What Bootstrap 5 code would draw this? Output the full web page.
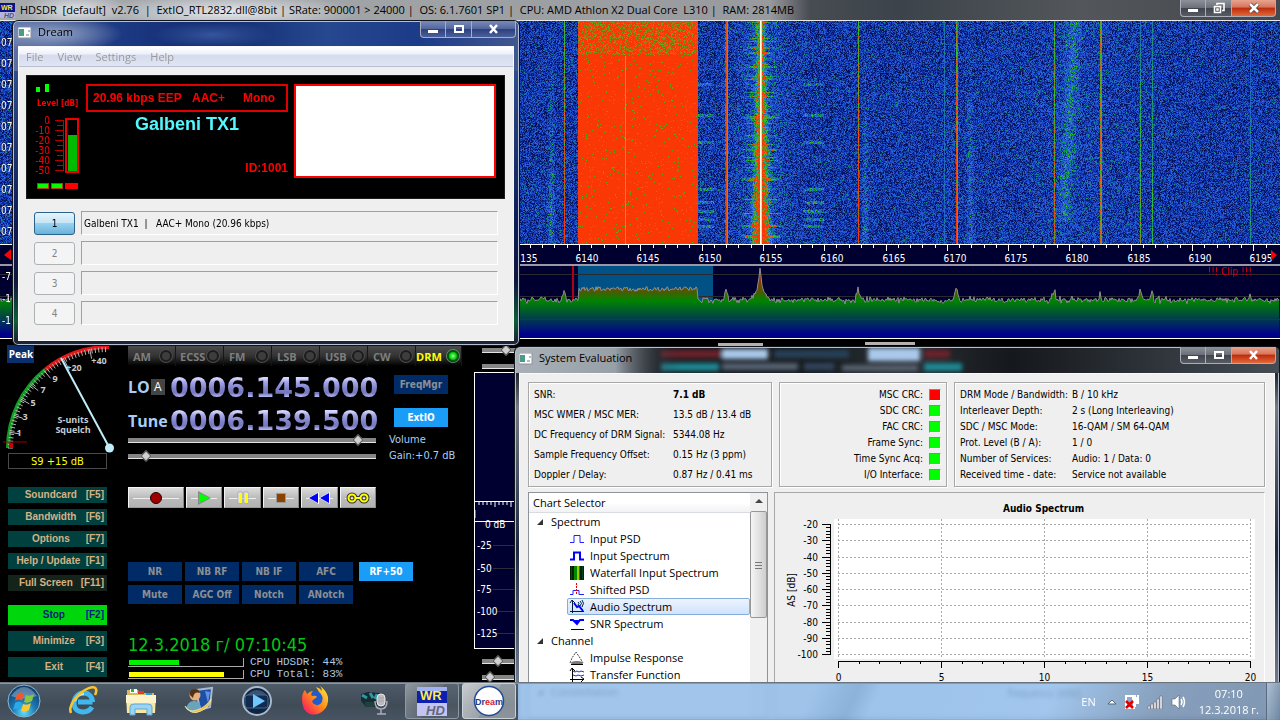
<!DOCTYPE html>
<html lang="en">
<head>
<meta charset="utf-8">
<meta name="viewport" content="width=device-width, initial-scale=1">
<title>HDSDR and Dream</title>
<link href="https://cdn.jsdelivr.net/npm/bootstrap@5.3.0/dist/css/bootstrap.min.css" rel="stylesheet">
<style>
:root { --seg: "Open Sans", "Noto Sans", sans-serif; --tah: "DejaVu Sans Condensed", "DejaVu Sans", sans-serif; --ari: "Liberation Sans", Arial, sans-serif; }
body { font: 11px/16px var(--seg); color: #000; background: #000; }
.tah { font-family: var(--tah); font-size: 10px; }
canvas, svg { display: block; }
.btn { --bs-btn-padding-x: 0; --bs-btn-padding-y: 0; --bs-btn-border-radius: 0; --bs-btn-font-size: 10px; --bs-btn-line-height: 14px; flex-shrink: 0; }

/* title bars */
.titlebar { height: 26px; }
.titlebar .caption { padding: 3px 0 0 6px; }
.titlebar .sysicon { margin-top: 6px; }
.appbar { height: 21px; border-bottom: 1px solid #e8e8e8;
  background: radial-gradient(ellipse 55px 16px at 75px 10px, #dfe4ea, transparent), radial-gradient(ellipse 130px 18px at 230px 12px, #e4e9ee, transparent), linear-gradient(90deg, #a6a9ac 0, #a0a3a6 400px, #989a9d 770px, #474c52 810px, #3c434a 900px, #53575b 1080px, #43484e 100%); }
.appbar .caption { white-space: pre; line-height: 20px; }
.winbtns .btn { height: 17px; width: 26px; border: 1px solid #a9aeb8; border-top: 0; border-left-width: 0; background: linear-gradient(#8d9199, #6b7078 48%, #3e434c 50%, #565b64); }
.winbtns .btn:first-child { border-left-width: 1px; border-bottom-left-radius: 4px; }
.winbtns .btn:last-child { width: 44px; border-bottom-right-radius: 4px; }
.winbtns .closer { background: linear-gradient(#e8a48f, #d9745a 45%, #bb2b0c 50%, #e2683a); }
.winbtns-blue .btn { background: linear-gradient(#7a8ab8, #53669e 48%, #2c3f7c 50%, #4a5f9c); }
.win .winbtns { margin-right: -2px; }

/* receiver display */
.app { min-height: 0; overflow: hidden; }
.waterfall { height: 223px; }
.scale { height: 20px; background: #000030; border-top: 1px solid #fff; font-size: 10px; }
.trace { height: 75px; border-top: 2px solid #9a98a4; border-bottom: 1px solid #fff; background: #000030; }
.scale, .trace, .times { color: #fff; font-family: var(--tah); }
.times { top: 11px; left: 1px; font-size: 10px; line-height: 21px; text-shadow: 0 0 1px #000; }
.levels { top: 0; left: 2px; font-size: 10px; line-height: 22px; }
.clip-note { right: 28px; top: -2px; color: #e00010; }
.panel { background: #000; min-height: 0; }

/* control panel */
.col-keys { width: 128px; padding-top: 6px; }
.keys { width: 99px; margin-left: 8px; }
.sbox { height: 16px; border: 1px solid #4a4a4a; color: #ff0; font: 11px/15px var(--tah); margin-bottom: 18px; }
.keylist { gap: 6px; }
.keybtn { display: flex; height: 16px; padding: 0 3px 0 8px; background: #00403f; color: #d6b184; border: 0; font: bold 10px/16px var(--ari); }
.keybtn:hover { background: #005a58; color: #d6b184; }
.keybtn.tall { height: 20px; line-height: 20px; padding-left: 14px; }
.keybtn.wide { padding-left: 3px; }
.keybtn.dim { background: #14241a; }
.keybtn.go { background: #00d60c; color: #001c80; }
.col-ctl { width: 346px; padding-top: 7px; }
.mode { width: 48px; height: 20px; padding: 0 3px 0 5px; border: 0; border-right: 1px solid #161616; background: linear-gradient(#4a4a4a, #333 50%, #000); color: #7e7e7e; font: bold 11px/19px var(--seg); }
.mode.on { color: #ff0; width: 46px; padding: 0 2px 0 0; }
.led { width: 12px; height: 12px; border: 2px solid #1c1c1c; border-radius: 50%; background: #3d3d3d; box-shadow: 0 0 0 1px #4b4b4b; }
.on .led { background: radial-gradient(#9f9, #0c0 60%); border-color: #051; box-shadow: 0 0 0 1px #686; }
.freqrow { height: 24px; margin-top: 9px; }
.name { width: 42px; font: bold 16px/26px var(--seg); color: #a9cdf7; }
.name button { width: 14px; height: 16px; margin-left: 1px; font: 12px/16px var(--seg); color: #fff; background: #444; border: 0; }
.freq { width: 224px; font: bold 27px/26px "DejaVu Sans", sans-serif; background: linear-gradient(#d4d6ff 14%, #a3a5e6 30%, #8183ca 55%, #7577bd 75%, #b9bcf8 92%); -webkit-background-clip: text; background-clip: text; color: transparent; }
.pad { width: 54px; height: 19px; background: #002b66; color: #8b8f94; border: 0; font: bold 10px/19px var(--tah); }
.pad:hover { background: #003c8c; color: #bbb; }
.pad.lit { background: #1a9df6; color: #fff; }
.lbl { color: #a9cdf7; font: 11px/16px var(--tah); margin-left: 13px; }
.sldbox { width: 248px; }
.sld { -webkit-appearance: none; appearance: none; display: block; height: 16px; width: 100%; margin: 0; background: linear-gradient(#858585, #858585) 0 6px / 100% 4px no-repeat, linear-gradient(#e4e4e4, #e4e4e4) 0 10px / 100% 1px no-repeat; }
.sld::-webkit-slider-thumb { -webkit-appearance: none; width: 8px; height: 8px; background: #d0d0d0; border: 1px solid #555; transform: rotate(45deg); }
.deck { width: 248px; margin-top: 23px; gap: 2px; }
.deck .btn { flex: 1 1 0; height: 21px; border: 1px solid #f4f4f4; border-right-color: #888; border-bottom-color: #999; background: linear-gradient(90deg, #eee, #eee) 4px 10px / calc(100% - 8px) 1px no-repeat, linear-gradient(#dcdcdc, #bcbcbc 50%, #b2b2b2); }
.deck .btn:first-child { flex: 0 0 56px; }
.fx { margin-top: 54px; display: grid; grid-template-columns: repeat(4, 54px) 54px; gap: 4px 3px; }
.fx .lit { margin-left: 3px; }
.today { margin-top: 30px; color: #00c814; font: 18px/22px var(--tah); }
.cpu { height: 12px; font: 11px/12px "Liberation Mono", monospace; color: #a9c8e8; gap: 6px; }
.gauge { width: 116px; height: 9px; border: 1px solid #aaa; border-width: 0 1px 1px 0; --bs-progress-bg: #000; --bs-progress-border-radius: 0; padding: 2px 0 1px 1px; }
.audio { width: 60px; padding-top: 3px; }
.af { height: 277px; margin-top: -2px; background: #000030; border: 1px solid #fff; }

/* framed windows */
.win { border: 1px solid #10141c; border-radius: 6px; box-shadow: inset 0 0 0 1px #b7c0d0; padding: 0 5px 5px; }
.dream { left: 12px; top: 20px; width: 508px; height: 326px; background: radial-gradient(ellipse 70px 18px at 40px 13px, #93a3c4, transparent), radial-gradient(ellipse 60px 14px at 200px 14px, #35559c, transparent), linear-gradient(90deg, #5b70a4, #1d3a84 20%, #122a70 40%, #26488f 62%, #1c3b88 80%, #40588f) 0 0 / 100% 50px no-repeat, linear-gradient(#31508f 40px, #0d1d55 200px, #10163c 260px, #0e5f36 300px, #1d2433 320px); }
.dream .titlebar { height: 25px; }
.body-face { background: #efefef; border: 1px solid #fafafa; }
.dream .body-face { height: 295px; }
.menus { height: 20px; background: linear-gradient(#fff, #eef1f9 35%, #d6dcee 45%, #dfe5f3); border-bottom: 1px solid #b9bfd0; }
.menus .nav-link { padding: 0 7px; color: #9a9a9a; font-size: 11px; line-height: 19px; }
.screen { margin: 8px 8px 0 7px; height: 124px; background: #000; color: #f00; border: 1px solid #1c1c1c; font: bold 12px/16px var(--ari); padding: 8px; gap: 6px; }
.info { margin-left: -1px; }
.stat { border: 2px solid #e00000; height: 28px; }
.rate { width: 104px; padding-left: 5px; }
.codec { width: 51px; }
.logo-area { width: 202px; height: 94px; border: 2px solid #f00; background: #fff; }
.station { font-size: 18px; line-height: 24px; color: #54f7ff; margin-bottom: 24px; }
.svc { gap: 6px; padding: 12px 15px 0; }
.svc > div { gap: 6px; }
.svc .btn { width: 41px; height: 23px; border: 1px solid #adb2b5; border-radius: 3px; background: #f4f4f4; color: #838383; font: 10px/21px var(--tah); opacity: 1; }
.svc .btn.cur { border-color: #2c628b; background: linear-gradient(#e5f4fc, #c4e5f6 48%, #98d1ef 50%, #68b3db); color: #000; }
.svc .form-control { height: 24px; padding: 0 2px; font: 10px/22px var(--tah); border: 1px solid #fff; border-top-color: #a0a0a0; border-left-color: #a0a0a0; border-radius: 0; background: #efefef; color: #000; }
.evalwin { left: 514px; right: 0; top: 346px; bottom: 0; border-radius: 6px 6px 0 0; padding: 0 4px; background: linear-gradient(#4d5660 0, #232a33 28px, #737a84 60px, #1d2740 200px, #8790a0 100%); overflow: hidden; }
.evalwin .winbtns { margin-right: -1px; }
.evalwin .body-face { padding: 8px 9px 0 8px; }
.glass { left: 1px; top: 1px; width: 100%; height: 25px; }
.readouts { gap: 7px; }
.cell3 { border: 1px solid #a8a8a8; box-shadow: inset 1px 1px #fff, 1px 1px #fff; padding: 4px 5px; height: 105px; }
.cell3.quality { width: 244px; padding-top: 2px; flex-shrink: 0; }
.cell3.checks { width: 168px; flex-shrink: 0; }
.cell3 table { font: 10px/16px var(--tah); }
.cell3 td, .cell3 th { padding: 0; font-weight: normal; white-space: nowrap; }
.quality td, .quality th { line-height: 20px; }
.quality th { width: 139px; }
.service { padding-right: 0; }
.service th { width: 112px; }
.checks td { width: 18px; }
.lamp { width: 12px; height: 12px; border: 1px solid #888; border-right-color: #fff; border-bottom-color: #fff; background: #0f0; }
.lamp.bad { background: #f00; }
.lower { gap: 6px; margin-top: 5px; }
.tree { width: 240px; border: 1px solid #8d929b; background: #fff; font-size: 11px; }
.tree header { height: 20px; line-height: 20px; padding-left: 4px; background: linear-gradient(#fff 50%, #f1f2f4); border-bottom: 1px solid #d8dbe0; }
.tree li { height: 17px; line-height: 17px; display: flex; align-items: center; }
.tree .group { padding-left: 6px; gap: 6px; }
.tree .leaf { margin-left: 38px; padding-left: 2px; gap: 5px; }
.tree .picked { border: 1px solid #84acdd; border-radius: 2px; background: linear-gradient(#ecf4fe, #cfe3fc); padding-left: 1px; }
.bar-v { width: 17px; background: #f0f0f0; }
.grip { height: 107px; border: 1px solid #979797; border-radius: 2px; background: linear-gradient(90deg, #f5f5f5, #e2e2e2 50%, #cdcdcd); }
.chartbox { border: 1px solid #a8a8a8; border-right-color: #fff; }
.chartbox h2 { font: bold 10px/16px var(--tah); margin: 8px 0 0 48px; }

/* taskbar */
.taskbar { height: 38px; padding-left: 3px; border-top: 1px solid #6c757e; box-shadow: inset 0 1px #8b98a5; background: linear-gradient(#4e5b68, #3f4b57 60%, #485461) 0 0 / 518px 100% no-repeat, linear-gradient(115deg, #90bbe8d8 0, #90bbe8d8 740px, #7aa6d6d8 780px, #8fbbead8 800px, #93beecd8 960px, #7390b2d8 1060px, #7089a8e0 1200px); backdrop-filter: blur(2px); }
.task { width: 58px; height: 36px; border: 0; }
.task.start { width: 51px; }
.task.open { width: 54px; margin-left: 3px; border: 1px solid #8d99a5; border-radius: 3px; background: linear-gradient(125deg, #ffffff60, #ffffff20 50%, #ffffff10 52%); }
.task.front { background: linear-gradient(125deg, #ffffffb0, #ffffff78 50%, #ffffff60 52%); border-color: #c8d0d8; }
.tray { color: #fff; gap: 7px; }
.tray .lang { margin-right: 4px; }
.peek { width: 14px; border-left: 1px solid #5a6c80; background: linear-gradient(110deg, #c4d2e0a0, #6d86a0a0); }
</style>
</head>
<body>
<div class="position-relative vh-100 overflow-hidden d-flex flex-column">

<main class="app flex-grow-1 d-flex flex-column">
  <div class="appbar d-flex align-items-start flex-shrink-0">
    <svg class="flex-shrink-0" width="16" height="19" viewBox="0 0 16 19"><rect y="3" width="15" height="9" fill="#0a1487"/><text x="1" y="10" font-family="Liberation Sans" font-weight="bold" font-size="7" fill="#ffe430">WR</text><rect y="12" width="15" height="6" fill="#b4b4e4"/><text x="4" y="18" font-family="Liberation Sans" font-style="italic" font-weight="bold" font-size="7" fill="#556">HD</text></svg>
    <span class="caption flex-grow-1 ms-1 text-truncate">HDSDR  [default]  v2.76  |  ExtIO_RTL2832.dll@8bit | SRate: 900001 &gt; 24000 |  OS: 6.1.7601 SP1 |  CPU: AMD Athlon X2 Dual Core  L310 |  RAM: 2814MB</span>
    <div class="winbtns d-flex me-1">
      <button class="btn" aria-label="Minimize"><svg class="mx-auto" width="12" height="12" viewBox="0 0 12 12"><rect x="1" y="7" width="10" height="3" fill="#fff"/></svg></button>
      <button class="btn" aria-label="Restore"><svg class="mx-auto" width="12" height="12" viewBox="0 0 12 12"><path d="M4 3V1.500h7v7H9M1.500 4.500h6v6h-6zM4 7h1v1H4z" fill="none" stroke="#fff" stroke-width="1.600"/></svg></button>
      <button class="btn closer" aria-label="Close"><svg class="mx-auto" width="12" height="12" viewBox="0 0 12 12"><path d="M2 2l8 8M10 2l-8 8" stroke="#444" stroke-width="4"/><path d="M2 2l8 8M10 2l-8 8" stroke="#fff" stroke-width="2.500"/></svg></button>
    </div>
  </div>
  <div class="waterfall position-relative flex-shrink-0">
    <canvas id="fall" class="w-100 h-100"></canvas>
    <div class="times position-absolute">07<br>07<br>07<br>07<br>07<br>07<br>07<br>07<br>07<br>07</div>
  </div>
  <div class="scale flex-shrink-0"><svg id="ruler" width="100%" height="19"></svg></div>
  <div class="trace position-relative flex-shrink-0">
    <canvas id="spec" class="w-100 h-100"></canvas>
    <div class="levels position-absolute">-7<br>-1<br>-1</div>
    <div class="clip-note position-absolute tah">!!! Clip !!!</div>
  </div>

  <section class="panel flex-grow-1 d-flex" aria-label="Receiver controls">
    <div class="col-keys flex-shrink-0">
      <svg id="meter" width="118" height="108" viewBox="0 345 118 108" role="img" aria-label="S-meter"></svg>
      <div class="keys">
        <div class="sbox text-center">S9 +15 dB</div>
        <div class="keylist d-flex flex-column">
          <button class="btn keybtn"><span class="flex-grow-1">Soundcard</span><span>[F5]</span></button>
          <button class="btn keybtn"><span class="flex-grow-1">Bandwidth</span><span>[F6]</span></button>
          <button class="btn keybtn"><span class="flex-grow-1">Options</span><span>[F7]</span></button>
          <button class="btn keybtn wide"><span class="flex-grow-1">Help / Update</span><span>[F1]</span></button>
          <button class="btn keybtn wide dim mb-2"><span class="flex-grow-1">Full Screen</span><span>[F11]</span></button>
          <button class="btn keybtn tall go"><span class="flex-grow-1">Stop</span><span>[F2]</span></button>
          <button class="btn keybtn tall"><span class="flex-grow-1">Minimize</span><span>[F3]</span></button>
          <button class="btn keybtn tall"><span class="flex-grow-1">Exit</span><span>[F4]</span></button>
        </div>
      </div>
    </div>
    <div class="col-ctl flex-shrink-0">
      <div class="d-flex">
        <button class="btn mode d-flex justify-content-between align-items-center">AM<span class="led"></span></button>
        <button class="btn mode d-flex justify-content-between align-items-center px-1">ECSS<span class="led"></span></button>
        <button class="btn mode d-flex justify-content-between align-items-center">FM<span class="led"></span></button>
        <button class="btn mode d-flex justify-content-between align-items-center">LSB<span class="led"></span></button>
        <button class="btn mode d-flex justify-content-between align-items-center">USB<span class="led"></span></button>
        <button class="btn mode d-flex justify-content-between align-items-center">CW<span class="led"></span></button>
        <button class="btn mode on d-flex justify-content-between align-items-center">DRM<span class="led"></span></button>
      </div>
      <div class="d-flex freqrow"><div class="name d-flex align-items-center">LO<button class="p-0">A</button></div><div class="freq">0006.145.000</div><button class="btn pad">FreqMgr</button></div>
      <div class="d-flex freqrow"><div class="name">Tune</div><div class="freq">0006.139.500</div><button class="btn pad lit">ExtIO</button></div>
      <div class="d-flex"><div class="sldbox"><input id="vol" class="sld" type="range" value="94"></div><label class="lbl" for="vol">Volume</label></div>
      <div class="d-flex"><div class="sldbox"><input id="gain" class="sld" type="range" value="6"></div><label class="lbl" for="gain">Gain:+0.7 dB</label></div>
      <div class="deck d-flex">
        <button class="btn" aria-label="Record"><svg class="mx-auto" width="14" height="14"><circle cx="7" cy="7" r="5.500" fill="#a00000" stroke="#200"/></svg></button>
        <button class="btn" aria-label="Play"><svg class="mx-auto" width="14" height="14"><path d="M1 0l13 7-13 7z" fill="#888"/><path d="M2 2l11 5-11 5z" fill="#0f0"/></svg></button>
        <button class="btn" aria-label="Pause"><svg class="mx-auto" width="14" height="14"><path d="M2 1h4v11H2zM8 1h4v11H8z" fill="#fff" stroke="#aaa"/><path d="M3 2h3v10H3zM9 2h3v10H9z" fill="#ff0"/></svg></button>
        <button class="btn" aria-label="Stop playback"><svg class="mx-auto" width="14" height="14"><rect x="2.500" y="2.500" width="9" height="9" fill="#8a4300" stroke="#9a9a9a"/></svg></button>
        <button class="btn" aria-label="Rewind"><svg class="mx-auto" width="22" height="14"><path d="M11 1v12L0 7zM22 1v12L11 7z" fill="#fff"/><path d="M10 2v10L1 7zM21 2v10l-9-5z" fill="#00f"/></svg></button>
        <button class="btn" aria-label="Loop"><svg class="mx-auto" width="24" height="14"><g fill="none"><circle cx="6" cy="7" r="3.500" stroke="#333" stroke-width="4"/><circle cx="18" cy="7" r="3.500" stroke="#333" stroke-width="4"/><path d="M9 7h6" stroke="#333" stroke-width="4"/><circle cx="6" cy="7" r="3.500" stroke="#ff0" stroke-width="2"/><circle cx="18" cy="7" r="3.500" stroke="#ff0" stroke-width="2"/><path d="M9 7h6" stroke="#ff0" stroke-width="2"/></g></svg></button>
      </div>
      <div class="fx">
        <button class="btn pad">NR</button><button class="btn pad">NB RF</button><button class="btn pad">NB IF</button><button class="btn pad">AFC</button><button class="btn pad lit">RF+50</button>
        <button class="btn pad">Mute</button><button class="btn pad">AGC Off</button><button class="btn pad">Notch</button><button class="btn pad">ANotch</button>
      </div>
      <div class="today">12.3.2018 г/ 07:10:45</div>
      <div class="cpu d-flex align-items-center"><div class="progress gauge"><div class="progress-bar" style="width:44%;background:#00f000"></div></div>CPU HDSDR: 44%</div>
      <div class="cpu d-flex align-items-center"><div class="progress gauge"><div class="progress-bar" style="width:83%;background:#ffff00"></div></div>CPU Total: 83%</div>
    </div>
    <div class="audio flex-shrink-0">
      <div class="ps-2"><input class="sld" type="range" value="45" aria-label="Audio zoom"><input class="sld" type="range" value="95" aria-label="Audio speed"></div>
      <div class="af"><svg width="58" height="274" class="tah">
        <path d="M0 128.500h58M0 148.500h58" stroke="#fff"/><path d="M4 129v3M8 129v3M12 129v3M16 129v3M20 129v5M24 129v3M28 129v3M32 129v3M36 129v5M40 129v3" stroke="#fff"/>
        <path d="M0 137v8" stroke="#ffe080"/><path d="M18 172.500h40M18 195.500h40M18 216.500h40M22 238.500h40M22 260.500h40" stroke="#2c2c3c"/>
        <g fill="#fff"><text x="10" y="155">0 dB</text><text x="2" y="176">-25</text><text x="2" y="199">-50</text><text x="2" y="220">-75</text><text x="2" y="242">-100</text><text x="2" y="264">-125</text></g></svg></div>
      <div class="ps-2 pt-1"><input class="sld" type="range" value="28" aria-label="Audio contrast"><input class="sld" type="range" value="8" aria-label="Audio brightness"></div>
    </div>
    <div class="flex-grow-1"><svg width="100%" height="8"><path d="M184 5.500h45M331 4.500h50" stroke="#b4b0b0" stroke-width="3"/></svg></div>
  </section>
</main>

<section class="win dream position-absolute" aria-label="Dream">
  <div class="titlebar d-flex">
    <svg class="sysicon" width="14" height="12" viewBox="0 0 14 12"><rect width="13" height="11" fill="#fff" stroke="#8a94a0"/><rect x="1" y="2" width="5" height="7" fill="#4a9a88"/><path d="M8 8h3M11 3v2" stroke="#678"/></svg>
    <span class="caption flex-grow-1">Dream</span>
    <div class="winbtns winbtns-blue d-flex">
      <button class="btn" aria-label="Minimize"><svg class="mx-auto" width="12" height="12"><rect x="1" y="7" width="10" height="3" fill="#fff"/></svg></button>
      <button class="btn" aria-label="Maximize"><svg class="mx-auto" width="12" height="12"><rect x="2" y="3" width="8" height="6" fill="none" stroke="#fff" stroke-width="2"/></svg></button>
      <button class="btn" aria-label="Close"><svg class="mx-auto" width="12" height="12"><path d="M2 2l7 8M9 2l-7 8" stroke="#fff" stroke-width="2.500"/></svg></button>
    </div>
  </div>
  <div class="body-face">
    <nav class="menus nav flex-nowrap"><a class="nav-link" href="#">File</a><a class="nav-link" href="#">View</a><a class="nav-link" href="#">Settings</a><a class="nav-link" href="#">Help</a></nav>
    <div class="screen d-flex">
      <svg width="46" height="108" viewBox="35 84 46 108" class="flex-shrink-0">
        <path d="M36 87h4v5h-4zM45 84h4v8h-4z" fill="#0f0"/>
        <text x="37" y="106" font-family="DejaVu Sans Condensed" font-weight="bold" font-size="8" fill="#f00">Level [dB]</text>
        <g font-family="DejaVu Sans Condensed" font-weight="normal" font-size="10" fill="#f00" text-anchor="end"><text x="50" y="124">0</text><text x="50" y="134">-10</text><text x="50" y="144">-20</text><text x="50" y="154">-30</text><text x="50" y="164">-40</text><text x="50" y="174">-50</text></g>
        <path d="M55 120.500h8M57 125.500h6M55 130.500h8M57 135.500h6M55 140.500h8M57 145.500h6M55 150.500h8M57 155.500h6M55 160.500h8M57 165.500h6M55 170.500h8M63.500 120v51" stroke="#b00"/>
        <rect x="66" y="119" width="12" height="53" fill="none" stroke="#e00" stroke-width="2"/><rect x="68" y="135" width="9" height="36" fill="#0b0"/>
        <g stroke="#a40"><rect x="37.500" y="183.500" width="11" height="5" fill="#0f0"/><rect x="51.500" y="183.500" width="11" height="5" fill="#0f0"/><rect x="65.500" y="183.500" width="12" height="5" fill="#f00" stroke="#f00"/></g>
      </svg>
      <div class="info flex-grow-1 d-flex flex-column">
        <div class="stat d-flex align-items-center"><span class="rate">20.96 kbps EEP</span><span class="codec">AAC+</span><span>Mono</span></div>
        <div class="station text-center">Galbeni TX1</div>
        <div class="text-end">ID:1001</div>
      </div>
      <div class="logo-area flex-shrink-0"></div>
    </div>
    <div class="svc d-flex flex-column">
      <div class="d-flex align-items-center"><button class="btn cur">1</button><input class="form-control" readonly aria-label="Service 1" value="Galbeni TX1  |   AAC+ Mono (20.96 kbps)"></div>
      <div class="d-flex align-items-center"><button class="btn" disabled>2</button><input class="form-control" readonly aria-label="Service 2"></div>
      <div class="d-flex align-items-center"><button class="btn" disabled>3</button><input class="form-control" readonly aria-label="Service 3"></div>
      <div class="d-flex align-items-center"><button class="btn" disabled>4</button><input class="form-control" readonly aria-label="Service 4"></div>
    </div>
  </div>
</section>

<section class="win evalwin position-absolute d-flex flex-column" aria-label="System Evaluation">
  <svg class="glass position-absolute"><defs><filter id="soft" x="-10%" y="-50%" width="120%" height="200%"><feGaussianBlur stdDeviation="2"/></filter>
    <linearGradient id="haze"><stop offset="0" stop-color="#a9b0b7"/><stop offset=".6" stop-color="#98a0a7"/><stop offset="1" stop-color="#20272f" stop-opacity="0"/></linearGradient>
    <linearGradient id="dusk"><stop offset="0" stop-color="#14181d"/><stop offset=".4" stop-color="#181c21"/><stop offset=".5" stop-color="#2a3036"/><stop offset=".65" stop-color="#15181c"/><stop offset="1" stop-color="#454d55"/></linearGradient></defs>
    <rect width="100%" height="25" fill="url(#dusk)"/>
    <g filter="url(#soft)"><rect x="145" y="2" width="60" height="8" fill="#6b232c"/><rect x="145" y="15" width="58" height="8" fill="#1f8792"/><rect x="206" y="1" width="46" height="10" fill="#a9c8ea"/><rect x="206" y="15" width="76" height="7" fill="#55626f"/><rect x="258" y="2" width="75" height="8" fill="#274157"/><rect x="288" y="15" width="30" height="7" fill="#32455c"/><rect x="352" y="0" width="52" height="13" fill="#a9c8ea"/><rect x="326" y="17" width="76" height="6" fill="#56626e"/><rect x="408" y="2" width="26" height="8" fill="#6b232c"/><rect x="408" y="15" width="38" height="8" fill="#1f8792"/></g>
    <rect width="165" height="25" fill="url(#haze)"/></svg>
  <div class="titlebar d-flex position-relative flex-shrink-0">
    <svg class="sysicon" width="14" height="12" viewBox="0 0 14 12"><rect width="13" height="11" fill="#fff" stroke="#8a94a0"/><rect x="1" y="2" width="5" height="7" fill="#4a9a88"/><path d="M8 8h3M11 3v2" stroke="#678"/></svg>
    <span class="caption flex-grow-1">System Evaluation</span>
    <div class="winbtns d-flex">
      <button class="btn" aria-label="Minimize"><svg class="mx-auto" width="12" height="12"><rect x="1" y="7" width="10" height="3" fill="#fff"/></svg></button>
      <button class="btn" aria-label="Maximize"><svg class="mx-auto" width="12" height="12"><rect x="2" y="3" width="8" height="6" fill="none" stroke="#fff" stroke-width="2"/></svg></button>
      <button class="btn closer" aria-label="Close"><svg class="mx-auto" width="12" height="12"><path d="M2 2l7 8M9 2l-7 8" stroke="#fff" stroke-width="2.500"/></svg></button>
    </div>
  </div>
  <div class="body-face position-relative flex-grow-1 d-flex flex-column">
    <div class="readouts d-flex">
      <div class="cell3 quality"><table class="w-100"><tbody>
        <tr><th>SNR:</th><td class="fw-bold">7.1 dB</td></tr>
        <tr><th>MSC WMER / MSC MER:</th><td>13.5 dB / 13.4 dB</td></tr>
        <tr><th>DC Frequency of DRM Signal:</th><td>5344.08 Hz</td></tr>
        <tr><th>Sample Frequency Offset:</th><td>0.15 Hz (3 ppm)</td></tr>
        <tr><th>Doppler / Delay:</th><td>0.87 Hz / 0.41 ms</td></tr></tbody></table></div>
      <div class="cell3 checks"><table class="w-100 text-end"><tbody>
        <tr><th>MSC CRC:</th><td><div class="lamp bad ms-auto"></div></td></tr>
        <tr><th>SDC CRC:</th><td><div class="lamp ms-auto"></div></td></tr>
        <tr><th>FAC CRC:</th><td><div class="lamp ms-auto"></div></td></tr>
        <tr><th>Frame Sync:</th><td><div class="lamp ms-auto"></div></td></tr>
        <tr><th>Time Sync Acq:</th><td><div class="lamp ms-auto"></div></td></tr>
        <tr><th>I/O Interface:</th><td><div class="lamp ms-auto"></div></td></tr></tbody></table></div>
      <div class="cell3 service flex-grow-1"><table class="w-100"><tbody>
        <tr><th>DRM Mode / Bandwidth:</th><td>B / 10 kHz</td></tr>
        <tr><th>Interleaver Depth:</th><td>2 s (Long Interleaving)</td></tr>
        <tr><th>SDC / MSC Mode:</th><td>16-QAM / SM 64-QAM</td></tr>
        <tr><th>Prot. Level (B / A):</th><td>1 / 0</td></tr>
        <tr><th>Number of Services:</th><td>Audio: 1 / Data: 0</td></tr>
        <tr><th>Received time - date:</th><td>Service not available</td></tr></tbody></table></div>
    </div>
    <div class="lower d-flex flex-grow-1">
      <div class="tree d-flex flex-shrink-0">
        <div class="flex-grow-1">
          <header>Chart Selector</header>
          <ul class="list-unstyled m-0">
            <li class="group"><svg width="10" height="10"><path d="M8 2v6H2z" fill="#333"/></svg>Spectrum</li>
            <li class="leaf"><svg width="16" height="16"><path d="M1 11.500h4v-7h6v7h4" fill="none" stroke="#22f"/></svg>Input PSD</li>
            <li class="leaf"><svg width="16" height="16"><path d="M1 11.500h4v-7h6v7h4" fill="none" stroke="#00f" stroke-width="2"/></svg>Input Spectrum</li>
            <li class="leaf"><svg width="16" height="16"><path d="M1 1h14v14H1z" fill="#020"/><path d="M2 1h1v14H2zM13 1h1v14h-1z" fill="#042"/><path d="M5 1h6v14H5z" fill="#080"/><path d="M8 1h2v14H8z" fill="#9c0"/></svg>Waterfall Input Spectrum</li>
            <li class="leaf"><svg width="16" height="16"><path d="M1 12.500h3v-4h6v4h5" fill="none" stroke="#22f"/><path d="M7.500 1v12" stroke="#e00" stroke-dasharray="2 1"/></svg>Shifted PSD</li>
            <li class="leaf picked"><svg width="16" height="16"><path d="M3.500 14V2M1 4l2-3 3 3M1 12.500h14" fill="none" stroke="#001a40"/><path d="M5 4l3 4 2-1 4 5" fill="none" stroke="#00f" stroke-width="2"/><path d="M9 3q2 1 0 3M11 2q3 2 0 5M13 1q3 3 0 7" fill="none" stroke="#024"/></svg>Audio Spectrum</li>
            <li class="leaf"><svg width="16" height="16"><path d="M1 4h3l4 4 3-4h4" fill="none" stroke="#00f" stroke-width="2"/><path d="M5 4h5l-2 4z" fill="#00f"/><path d="M2 13.500h13" stroke="#000"/></svg>SNR Spectrum</li>
            <li class="group"><svg width="10" height="10"><path d="M8 2v6H2z" fill="#333"/></svg>Channel</li>
            <li class="leaf"><svg width="16" height="16"><path d="M1 13l2-5 4-6 4 6 3 5" fill="none" stroke="#444" stroke-dasharray="2 1"/><ellipse cx="8" cy="13" rx="6" ry="2" fill="#777"/><path d="M2 14.500h12" stroke="#000"/></svg>Impulse Response</li>
            <li class="leaf"><svg width="16" height="16"><path d="M3.500 15V2M1 4l2-3 3 3M1 12.500h14M12 10l3 2-3 3" fill="none" stroke="#000"/><path d="M4 4l2 1 2-1 2 1 2-1 3 1M4 8l3 1 2-1 3 1 3-1" fill="none" stroke="#22f"/></svg>Transfer Function</li>
            <li class="group" aria-hidden="true"><svg width="10" height="10"><path d="M8 2v6H2z" fill="#333"/></svg>Constellation</li>
          </ul>
        </div>
        <div class="bar-v"><svg width="17" height="18"><path d="M5 10l4-4 4 4z" fill="#444"/></svg><div class="grip d-flex align-items-center justify-content-center"><svg width="8" height="8"><path d="M0 1.500h7M0 4.500h7M0 7.500h7" stroke="#777"/></svg></div></div>
      </div>
      <div class="chartbox flex-grow-1">
        <h2 class="text-center">Audio Spectrum</h2>
        <svg id="chart" class="tah" width="100%" height="185"></svg>
      </div>
    </div>
  </div>
</section>

<footer class="taskbar position-relative flex-shrink-0 d-flex align-items-stretch">
  <button class="btn task start" aria-label="Start"><svg width="38" height="36" viewBox="0 0 38 36"><defs><radialGradient id="orb" cx=".5" cy=".85" r=".9"><stop offset="0" stop-color="#5fe0ff"/><stop offset=".4" stop-color="#1d76b0"/><stop offset="1" stop-color="#0b2f5c"/></radialGradient></defs><circle cx="21" cy="18" r="16" fill="url(#orb)" stroke="#8fb7cc"/><path d="M8 13q13-18 26 0-13 5-26 0z" fill="#fff" opacity=".3"/><path d="M14 11q4-3 7 0l-2 7q-3-3-7 0z" fill="#f1592a"/><path d="M23 12q4 2 8-1l-2 7q-4 3-8 1z" fill="#8cc63f"/><path d="M12 20q4-3 7 0l-2 7q-4-3-7 0z" fill="#29a9e8"/><path d="M20 21q4 2 8-1l-2 7q-4 3-8 1z" fill="#fdc82f"/></svg></button>
  <button class="btn task" aria-label="Internet Explorer"><svg class="mx-auto" width="32" height="32" viewBox="0 0 32 32"><path d="M25.500 17H11M25 22q-3 5-9 5c-6 0-9-4-9-9s4-10 9.500-10 9 4 9 9" fill="none" stroke="#3fb8f0" stroke-width="5"/><path d="M8 16q2-7 9-7" fill="none" stroke="#b8ecff" stroke-width="2"/><path d="M4 28c-3-6 4-17 14-23 5-3 10-4 11-1 1 2 0 4-1 6" fill="none" stroke="#f7c52e" stroke-width="2.500"/></svg></button>
  <button class="btn task" aria-label="Explorer"><svg class="mx-auto" width="34" height="32" viewBox="0 0 34 32"><path d="M3 5h11l2 3h14v20H3z" fill="#d8ba5c"/><path d="M6 4h7v4H6z" fill="#fff"/><path d="M7 4h3v3H7z" fill="#2b2"/><path d="M14 6h6v3h-6z" fill="#e33"/><path d="M22 8h6v3h-6z" fill="#39d"/><path d="M2 10h30l-1 18H3z" fill="#f8e6a2"/><path d="M2 10h30v8H2z" fill="#fdf3c8"/><path d="M6 30V22q0-3 4-3h14q4 0 4 3v8h-5v-6H11v6z" fill="#9bd4f2" stroke="#5ba9d4"/></svg></button>
  <button class="btn task" aria-label="User account"><svg class="mx-auto" width="32" height="32" viewBox="0 0 32 32"><path d="M13 5l16-2-2 19-10 3z" fill="#1d4fa5" stroke="#a9b8cc" stroke-width="2"/><path d="M22 6l5 1-2 11z" fill="#5e94dd"/><circle cx="12" cy="10" r="5.500" fill="#e3b07e"/><path d="M7 10q-1-6 5-6 4 0 5 4-6-2-7 5z" fill="#513216"/><path d="M3 24q2-9 9-8 6 1 6 8l-5 4z" fill="#69a4ba"/><path d="M2 21q3 7 12 4T28 14q0 7-10 12T2 21z" fill="#f3be3b" stroke="#fff0b0" stroke-width=".7"/></svg></button>
  <button class="btn task" aria-label="Media player"><svg class="mx-auto" width="32" height="32" viewBox="0 0 32 32"><circle cx="16" cy="16" r="14" fill="#0d2443" stroke="#aab8c8" stroke-width="2"/><path d="M5 11q11-12 22 0v5H5z" fill="#3c5370"/><rect x="4" y="10" width="23" height="13" rx="3" fill="#112b4f" stroke="#456991"/><path d="M12 9l12 7-12 7z" fill="#6ec8ff"/></svg></button>
  <button class="btn task" aria-label="Firefox"><svg class="mx-auto" width="32" height="32" viewBox="0 0 32 32"><defs><linearGradient id="fox" x1="1" y1="0" x2="0" y2="1"><stop offset="0" stop-color="#fff04a"/><stop offset=".45" stop-color="#ff9215"/><stop offset=".8" stop-color="#ff344f"/><stop offset="1" stop-color="#f018a0"/></linearGradient></defs><circle cx="17" cy="15" r="9" fill="#205bcf"/><path d="M3 14q0-6 3-9l2 4q3-3 6-3-3 3-1 5 4-1 5 1l-4 3q-2 2 1 4 5 3 8-2 2-6-3-10l-3-5q4 1 6 4 0-3-2-5 6 4 8 11 1 9-5 14t-13 3Q3 26 3 14z" fill="url(#fox)"/></svg></button>
  <button class="btn task" aria-label="Voice recorder"><svg class="mx-auto" width="32" height="32" viewBox="0 0 32 32"><path d="M4 9l7-2 11 1 3 5-5 9H9l-5-6z" fill="#152c32"/><path d="M5 10l5 3M13 8l3 5M20 9l-2 5" stroke="#2e98a2" stroke-width="3"/><path d="M8 17h9v5H8z" fill="#203f3d"/><rect x="20" y="9" width="8" height="12" rx="4" fill="#bbb" stroke="#e8e8e8"/><path d="M18 16q0 8 6 8t6-8M24 24v5M20 29h9M21 13h6M21 16h6" fill="none" stroke="#aab" stroke-width="1.500"/></svg></button>
  <button class="btn task open" aria-label="HDSDR"><svg class="mx-auto" width="32" height="32" viewBox="0 0 32 32"><rect x="1" y="2" width="30" height="16" fill="#0c1fae"/><rect x="1" y="2" width="30" height="4" fill="#a2b2f0"/><text x="4" y="15" font-family="Liberation Sans" font-weight="bold" font-size="13" fill="#ffe94a">WR</text><rect x="1" y="18" width="30" height="13" fill="#c2c5f4"/><text x="10" y="30" font-family="Liberation Sans" font-style="italic" font-weight="bold" font-size="13" fill="#667">HD</text></svg></button>
  <button class="btn task open front" aria-label="Dream"><svg class="mx-auto" width="32" height="32" viewBox="0 0 32 32"><circle cx="16" cy="16" r="14.500" fill="#fff" stroke="#234a94" stroke-width="1.500"/><text x="16" y="20" text-anchor="middle" font-family="Liberation Sans" font-weight="bold" font-size="9" fill="#1d3c8f">Dr<tspan fill="#e02030">ea</tspan>m</text></svg></button>
  <div class="tray ms-auto d-flex align-items-center">
    <span class="lang">EN</span>
    <svg width="10" height="10"><path d="M1 7l4-4 4 4z" fill="#fff" stroke="#567"/></svg>
    <svg width="16" height="16"><path d="M2 2h8v12H2z" fill="none" stroke="#fff" stroke-width="2"/><path d="M8 4h6v5H9M11 1v3M14 1v3M11 9v4" stroke="#fff" stroke-width="2" fill="#fff"/><path d="M2 7l7 7M9 7l-7 7" stroke="#e00000" stroke-width="2.500"/></svg>
    <svg width="16" height="14"><path d="M1 14v-3h2v3zM4 14V9h2v5zM7 14V7h2v7zM10 14V4h2v10zM13 14V1h2v13z" fill="#fff" stroke="#556" stroke-width=".5"/></svg>
    <svg width="18" height="16"><path d="M2 5h3l4-4v14l-4-4H2z" fill="#fff" stroke="#456" stroke-width=".5"/><path d="M11 5q2 3 0 6M13 3q3 5 0 10" fill="none" stroke="#fff" stroke-width="1.500"/></svg>
    <div class="text-center ms-1">07:10<br>12.3.2018 г.</div>
    <div class="peek align-self-stretch"></div>
  </div>
</footer>
</div>

<script src="https://cdn.jsdelivr.net/npm/bootstrap@5.3.0/dist/js/bootstrap.bundle.min.js"></script>
<script>
let seed = 7;
const rnd = () => { seed = (seed * 1664525 + 1013904223) >>> 0; return seed / 4294967296; };
const X0 = 579, STEP = 61.3;

// signal level (0..1) to waterfall colour
const stops = [[0,[0,0,36]],[.25,[6,26,110]],[.45,[28,72,208]],[.58,[40,105,205]],[.68,[24,140,120]],[.8,[50,200,40]],[.9,[150,130,20]],[1,[250,56,5]]];
function colour(v) {
  v = Math.max(0, Math.min(1, v));
  for (let i = 1; i < stops.length; i++) if (v <= stops[i][0]) {
    const [a, ca] = stops[i - 1], [b, cb] = stops[i], t = (v - a) / (b - a);
    return ca.map((c, k) => c + (cb[k] - c) * t);
  }
}
function drawFall() {
  const c = document.getElementById('fall'), w = c.width = c.clientWidth, h = c.height = c.clientHeight;
  const g = c.getContext('2d'), im = g.createImageData(w, h);
  // column, level at the top, growth towards the bottom
  const lines = [[564,.24,.22],[858,.24,.24],[956,.26,.24],[957,.1,.2],[1054,.2,.14],[1100,.3,.02],[1101,.16,.06],[1140,.04,.26],[1152,.06,.14],[1250,-.08,.22],[944,.04,-.05]];
  const fuzz = [[551,3,0,.2],[865,3,0,.17],[970,3,.02,.18],[1080,60,.03,0]];
  const bursts = [63,94,121,168,181,190,198,205];
  for (let y = 0; y < h; y++) {
    const spread = 4 + y / h * 7 + (rnd() < .12 ? 12 : rnd() * 3), f = y / h;
    for (let x = 0; x < w; x++) {
      const n = (rnd() + rnd()) / 2;
      let v = .04 + n * .66;
      if (x >= 578 && x < 698) v = y < 34 ? (rnd() < .6 ? 1 : .83 + rnd() * .12) : (rnd() < .965 ? 1 : .86);
      else {
        for (const [lx, a, b] of lines) if (x === lx) v = .42 + n * .3 + a + b * f;
        for (const [lx, s, a, b] of fuzz) v += (a + b * f) * Math.exp(-((x - lx) ** 2) / (s * s));
        v += .17 * Math.exp(-((x - (1074 - f * 12)) ** 2) / 50) * (f < .9 ? 1 : .2);
        const d = Math.abs(x - 760.5);
        v += Math.max(0, 1 - d / spread) * (.5 + f * .3) + .1 * Math.exp(-d * d / 500);
        if (x === 726) v = .97; if (x === 727) v = .82; if (x === 725) v += .2;
        if ((x > 697 && x < 714) || (x > 802 && x < 824)) for (const b of bursts) if (Math.abs(y - b) < 2) v += .22;
      }
      let p = colour(v);
      if (x === 625 && y > 34) p = [255, 120, 30];
      if (x === 760) p = [255, 255, 235]; if (x === 761) p = [255, 205, 150];
      const i = (y * w + x) * 4; im.data[i] = p[0]; im.data[i + 1] = p[1]; im.data[i + 2] = p[2]; im.data[i + 3] = 255;
    }
  }
  g.putImageData(im, 0, 0);
}
function drawRuler() {
  const w = ruler.clientWidth; let s = '', t = '';
  for (let k = -47; X0 + k * STEP / 5 < w - 4; k++) { const x = Math.round(X0 + k * STEP / 5); if (x > 12) s += `M${x + .5} 0v${k % 5 ? 3 : 6}`; }
  for (let k = -1; X0 + k * STEP < w - 20; k++) t += `<text x="${Math.round(X0 + 8 + k * STEP)}" y="17" text-anchor="middle">${6140 + 5 * k}</text>`;
  ruler.innerHTML = `<path d="${s}" stroke="#fff"/><g fill="#fff" font-size="10">${t}</g><path d="M${w - 9} 5l6 5-6 5zM11 4v11l-7-5z" fill="#f00"/>`;
}
function drawSpec() {
  const c = document.getElementById('spec'), w = c.width = c.clientWidth, h = c.height = c.clientHeight, g = c.getContext('2d');
  g.fillStyle = '#000030'; g.fillRect(0, 0, w, h);
  g.fillStyle = '#005286'; g.fillRect(578, 0, 135, h);
  g.fillStyle = '#2a2a30'; for (const y of [8, 30]) g.fillRect(0, y, w, 1);
  g.fillStyle = '#b00018'; g.fillRect(572, 0, 2, h);
  const peaks = [[564,9],[726,11],[858,11],[956,11],[1054,10],[1100,7],[1140,10],[1152,8],[1250,5],[970,4]];
  const gr = g.createLinearGradient(0, 0, 0, h);
  gr.addColorStop(0, '#b02000'); gr.addColorStop(.14, '#a03000'); gr.addColorStop(.32, '#605000'); gr.addColorStop(.48, '#008400'); gr.addColorStop(.95, '#00008c'); gr.addColorStop(1, '#000080');
  g.beginPath(); g.moveTo(0, h);
  const pts = [];
  for (let x = 0; x < w; x++) {
    let y = 34 + (rnd() + rnd() + rnd() - 1.5) * 3;
    if (x > 578 && x < 698) y = 23 + (rnd() - .5) * 5;
    for (const [p, a] of peaks) y -= Math.max(0, a - Math.abs(x - p) * 3.5);
    const d = Math.abs(x - 760); y -= Math.max(0, 13 - d * 1.2) + Math.max(0, 20 - d * 7);
    y = Math.max(1, y); pts.push([x, y]); g.lineTo(x, y);
  }
  g.lineTo(w, h); g.fillStyle = gr; g.fill();
  g.strokeStyle = '#8e8e90'; g.lineWidth = 1; g.beginPath(); pts.forEach(([x, y]) => g.lineTo(x, y)); g.stroke();
  g.fillStyle = '#303038'; g.fillRect(0, 53, w, 1);
}
function drawMeter() {
  const cx = 109, cy = 448, pt = (a, r) => { a = a * Math.PI / 180; return `${(cx - r * Math.cos(a)).toFixed(1)} ${(cy - r * Math.sin(a)).toFixed(1)}`; };
  let s = '', m = '';
  for (let a = 0; a < 90; a += 2) s += `M${pt(a, 101)}L${pt(a, 96)}`;
  for (const a of [9, 19, 29, 39, 50, 63, 79]) m += `M${pt(a, 101)}L${pt(a, 91)}`;
  const nums = [['1',19,436],['3',25,420],['5',33,406],['7',43,393],['9',55,382],['+20',74,371],['+40',99,364]];
  meter.innerHTML = `<path d="M${pt(0,101)}A101 101 0 0 1 ${pt(51,101)}" fill="none" stroke="#129a22" stroke-width="4"/>
  <path d="M${pt(51,101)}A101 101 0 0 1 ${pt(90,101)}" fill="none" stroke="#e01818" stroke-width="4"/>
  <path d="${s}${m}" stroke="#b8b8b8"/><path d="M3 442h24" stroke="#900"/><path d="M9 443h4v5H9z" fill="#c00"/>
  <rect x="7" y="345" width="27" height="18" fill="#0a2f6b"/>
  <g fill="#c8ccd2" font-family="Open Sans" font-weight="bold" font-size="9" text-anchor="middle">${nums.map(n => `<text x="${n[1]}" y="${n[2]}">${n[0]}</text>`).join('')}<text x="73" y="423">S-units</text><text x="73" y="433">Squelch</text><text x="21" y="358" font-size="10" fill="#fff">Peak</text></g>
  <path d="M61 358L109 447" stroke="#bfeefa" stroke-width="2"/><circle cx="109.500" cy="448" r="4.500" fill="#bfeefa"/>`;
}
function drawChart() {
  const w = chart.clientWidth, L = 63, R = w - 14, pw = R - L; let grid = '', ax = '', t = '';
  for (let i = 0; i <= 8; i++) { const y = Math.round(7 + i * 16.25) + .5; grid += `M${L} ${y}H${R}`; ax += `M47 ${y}h8`; t += `<text x="43" y="${y + 3.5}" text-anchor="end">${-20 - 10 * i}</text>`; }
  for (let i = 0; i < 40; i++) ax += `M51 ${Math.round(7 + i * 3.25) + .5}h4`;
  for (let i = 0; i <= 20; i++) { const x = Math.round(L + pw * i / 20) + .5; ax += `M${x} 144v${i % 5 ? 3 : 7}`; if (i % 5 === 0) { grid += `M${x} 2V141`; t += `<text x="${x}" y="164" text-anchor="middle">${i}</text>`; } }
  chart.innerHTML = `<rect x="59" y="2" width="${R - 59 + 5}" height="140" fill="#fff"/><path d="${grid}" stroke="#aaa" stroke-dasharray="2 2" fill="none"/>
  <path d="${ax}M55.500 7v131M${L} 144.500H${R + 1}" stroke="#000"/>${t}<text transform="translate(20 73) rotate(-90)" text-anchor="middle">AS [dB]</text><text x="${L + pw / 2}" y="180" text-anchor="middle" aria-hidden="true">Frequency [kHz]</text>`;
}
const ruler = document.getElementById('ruler'), meter = document.getElementById('meter'), chart = document.getElementById('chart');
function drawAll() { seed = 7; drawFall(); drawRuler(); drawSpec(); drawMeter(); drawChart(); }
drawAll(); addEventListener('resize', drawAll);
</script>
</body>
</html>
